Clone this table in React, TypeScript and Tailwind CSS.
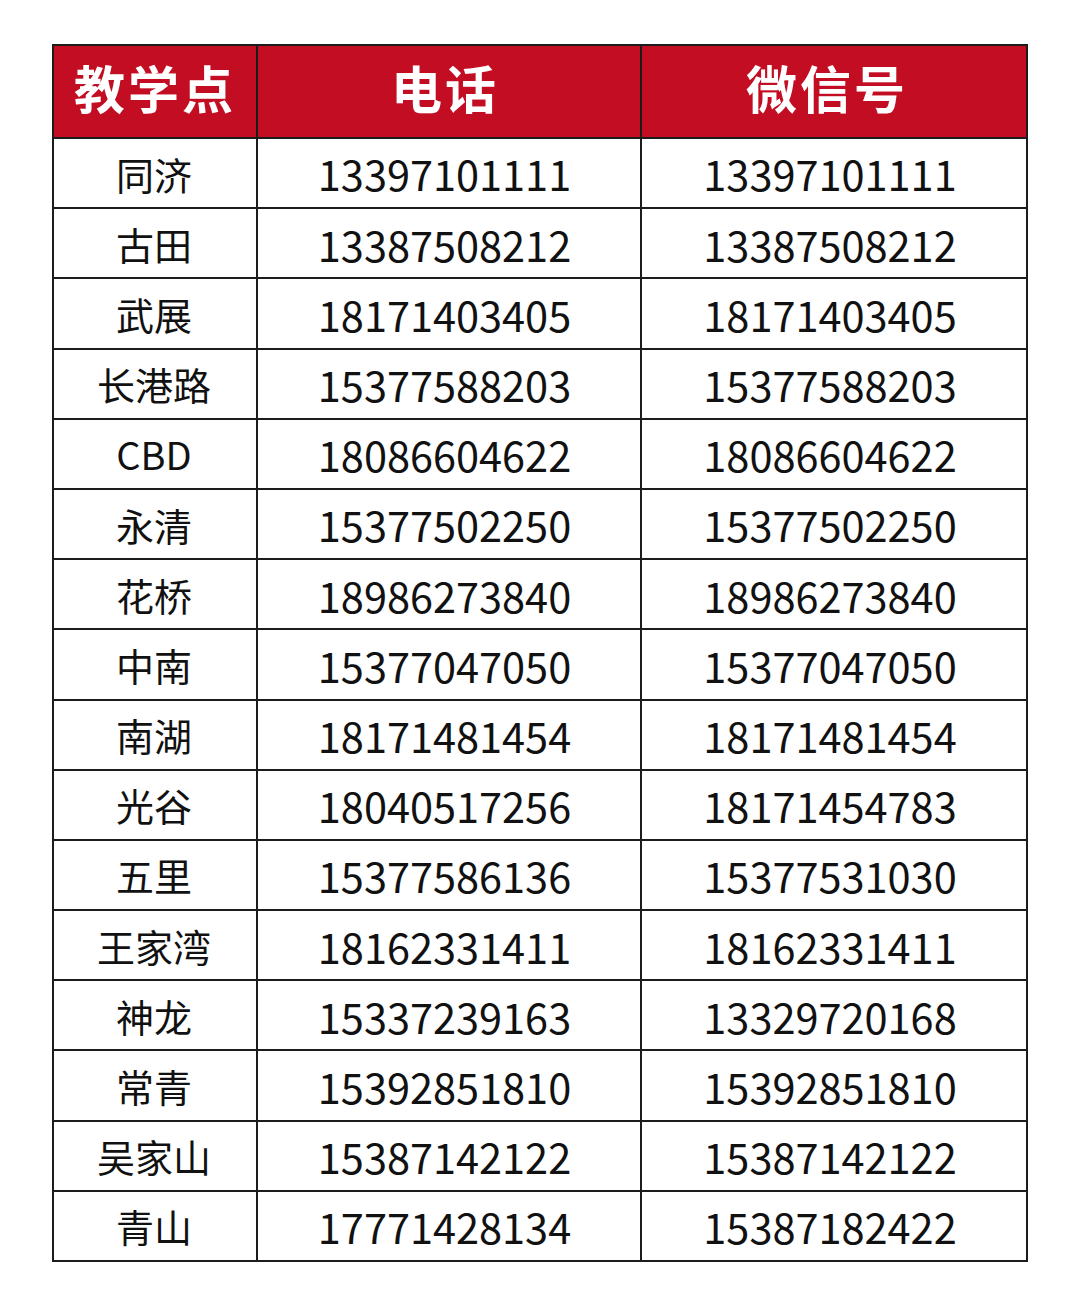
import React from "react";

const rows: [string, string, string][] = [
  ["同济", "13397101111", "13397101111"],
  ["古田", "13387508212", "13387508212"],
  ["武展", "18171403405", "18171403405"],
  ["长港路", "15377588203", "15377588203"],
  ["CBD", "18086604622", "18086604622"],
  ["永清", "15377502250", "15377502250"],
  ["花桥", "18986273840", "18986273840"],
  ["中南", "15377047050", "15377047050"],
  ["南湖", "18171481454", "18171481454"],
  ["光谷", "18040517256", "18171454783"],
  ["五里", "15377586136", "15377531030"],
  ["王家湾", "18162331411", "18162331411"],
  ["神龙", "15337239163", "13329720168"],
  ["常青", "15392851810", "15392851810"],
  ["吴家山", "15387142122", "15387142122"],
  ["青山", "17771428134", "15387182422"],
];

const font = { fontFamily: '"Noto Sans CJK SC", "Noto Sans", sans-serif' };

export default function App() {
  return (
    <div className="w-[1080px] h-[1298px] bg-white pt-[44px] pl-[52px]" style={font}>
      <div className="w-[976px] border-2 border-[#1c1c1c]">
        {/* header */}
        <div className="grid grid-cols-[204px_384px_1fr] h-[91px] bg-[#c30d23] text-white font-bold text-[51px] tracking-[3px]">
          <div className="flex items-center justify-center border-r-2 border-[#1c1c1c] pb-[8px]">教学点</div>
          <div className="flex items-center justify-center border-r-2 border-[#1c1c1c] pb-[8px] pr-[8px]">电话</div>
          <div className="flex items-center justify-center pb-[8px] pr-[14px]">微信号</div>
        </div>
        {rows.map(([name, tel, wx], i) => (
          <div
            key={i}
            className="grid grid-cols-[204px_384px_1fr] h-[70.2px] border-t-2 border-[#1c1c1c] text-[#111]"
          >
            <div className="flex items-center justify-center border-r-2 border-[#1c1c1c] text-[38px] pr-[2px]">
              {name}
            </div>
            <div className="flex items-center justify-center border-r-2 border-[#1c1c1c] text-[41.5px] pt-[1px] pr-[9px]">
              {tel}
            </div>
            <div className="flex items-center justify-center text-[41.5px] pt-[1px] pr-[8px]">{wx}</div>
          </div>
        ))}
      </div>
    </div>
  );
}
